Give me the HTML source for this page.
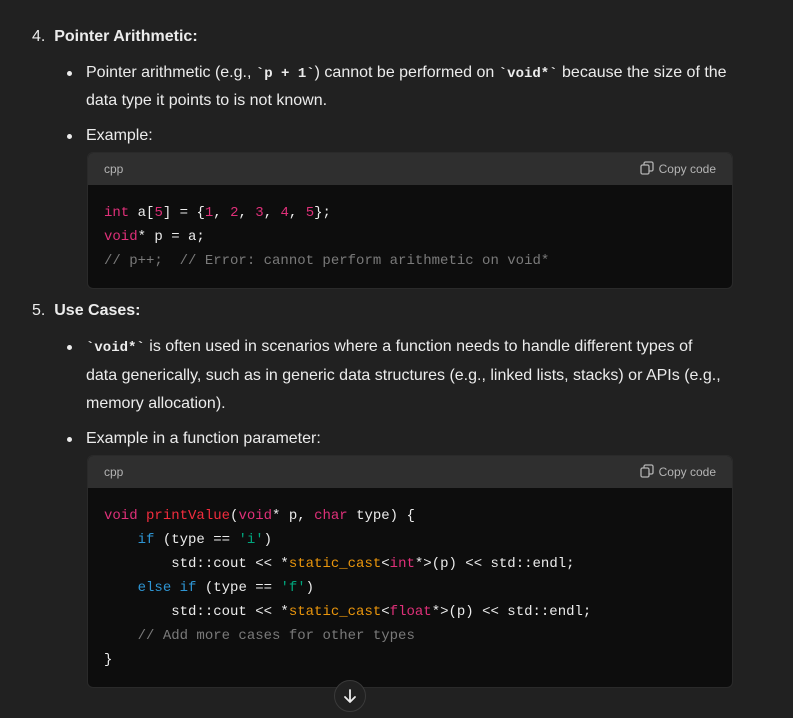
<!DOCTYPE html>
<html><head><meta charset="utf-8"><style>
body{margin:0;width:793px;height:718px;background:#212121;color:#ececec;font-family:"Liberation Sans",sans-serif;font-size:16px;overflow:hidden;position:relative}
.a{position:absolute;white-space:nowrap;line-height:28px}
.b{position:absolute;width:5px;height:5px;border-radius:50%;background:#ececec}
code{font-family:"Liberation Mono",monospace;font-size:14px;font-weight:bold;color:#ececec}
.box{position:absolute;left:87px;width:646px;background:#0d0d0d;border-radius:6px;overflow:hidden;border:1px solid #2a2a2a;box-sizing:border-box}
.hd{height:32px;background:#2f2f2f;position:relative;font-size:12px;color:#b4b4b4}
.hd .l{position:absolute;left:16px;top:9px}
.hd .r{position:absolute;right:16px;top:9px}
.hd svg{position:absolute;right:78px;top:8px}
pre{margin:0;padding:16px 16px 0 16px;font-family:"Liberation Mono",monospace;font-size:14px;line-height:24px;color:#ececec}
.k{color:#df3079}.f{color:#f22c3d}.n{color:#df3079}.c{color:#7a7a7a}.i{color:#2e95d3}.s{color:#00a67d}.o{color:#e9950c}
</style></head><body>
<div class="a" style="left:32px;top:23px">4.&nbsp; <b>Pointer Arithmetic:</b></div>
<div class="b" style="left:67px;top:71px"></div>
<div class="a" style="left:86px;top:59px">Pointer arithmetic (e.g., <code>`p + 1`</code>) cannot be performed on <code>`void*`</code> because the size of the</div>
<div class="a" style="left:86px;top:87px">data type it points to is not known.</div>
<div class="b" style="left:67px;top:134px"></div>
<div class="a" style="left:86px;top:122px">Example:</div>
<div class="box" style="top:152px;height:137px">
<div class="hd"><span class="l">cpp</span><svg width="14" height="14" viewBox="0 0 14 14" fill="none" stroke="#b4b4b4" stroke-width="1.3"><rect x="1" y="4" width="8" height="9" rx="1.5"/><path d="M4 4V2.5A1.5 1.5 0 0 1 5.5 1h6A1.5 1.5 0 0 1 13 2.5v6a1.5 1.5 0 0 1-1.5 1.5H9"/></svg><span class="r">Copy code</span></div>
<pre><span class="k">int</span> a[<span class="n">5</span>] = {<span class="n">1</span>, <span class="n">2</span>, <span class="n">3</span>, <span class="n">4</span>, <span class="n">5</span>};
<span class="k">void</span>* p = a;
<span class="c">// p++;  // Error: cannot perform arithmetic on void*</span></pre>
</div>
<div class="a" style="left:32px;top:297px">5.&nbsp; <b>Use Cases:</b></div>
<div class="b" style="left:67px;top:345px"></div>
<div class="a" style="left:86px;top:333px"><code>`void*`</code> is often used in scenarios where a function needs to handle different types of</div>
<div class="a" style="left:86px;top:362px">data generically, such as in generic data structures (e.g., linked lists, stacks) or APIs (e.g.,</div>
<div class="a" style="left:86px;top:390px">memory allocation).</div>
<div class="b" style="left:67px;top:437px"></div>
<div class="a" style="left:86px;top:425px">Example in a function parameter:</div>
<div class="box" style="top:455px;height:233px">
<div class="hd"><span class="l">cpp</span><svg width="14" height="14" viewBox="0 0 14 14" fill="none" stroke="#b4b4b4" stroke-width="1.3"><rect x="1" y="4" width="8" height="9" rx="1.5"/><path d="M4 4V2.5A1.5 1.5 0 0 1 5.5 1h6A1.5 1.5 0 0 1 13 2.5v6a1.5 1.5 0 0 1-1.5 1.5H9"/></svg><span class="r">Copy code</span></div>
<pre><span class="k">void</span> <span class="f">printValue</span>(<span class="k">void</span>* p, <span class="k">char</span> type) {
    <span class="i">if</span> (type == <span class="s">'i'</span>)
        std::cout &lt;&lt; *<span class="o">static_cast</span>&lt;<span class="k">int</span>*&gt;(p) &lt;&lt; std::endl;
    <span class="i">else</span> <span class="i">if</span> (type == <span class="s">'f'</span>)
        std::cout &lt;&lt; *<span class="o">static_cast</span>&lt;<span class="k">float</span>*&gt;(p) &lt;&lt; std::endl;
    <span class="c">// Add more cases for other types</span>
}</pre>
</div>
<div style="position:absolute;left:334px;top:680px;width:30px;height:30px;border-radius:50%;border:1px solid #3a3a3a;background:#212121">
<svg width="30" height="30" viewBox="0 0 30 30" fill="none" stroke="#ececec" stroke-width="1.8" stroke-linecap="round" stroke-linejoin="round"><path d="M15 9v12M10 16l5 5 5-5"/></svg></div>
</body></html>
